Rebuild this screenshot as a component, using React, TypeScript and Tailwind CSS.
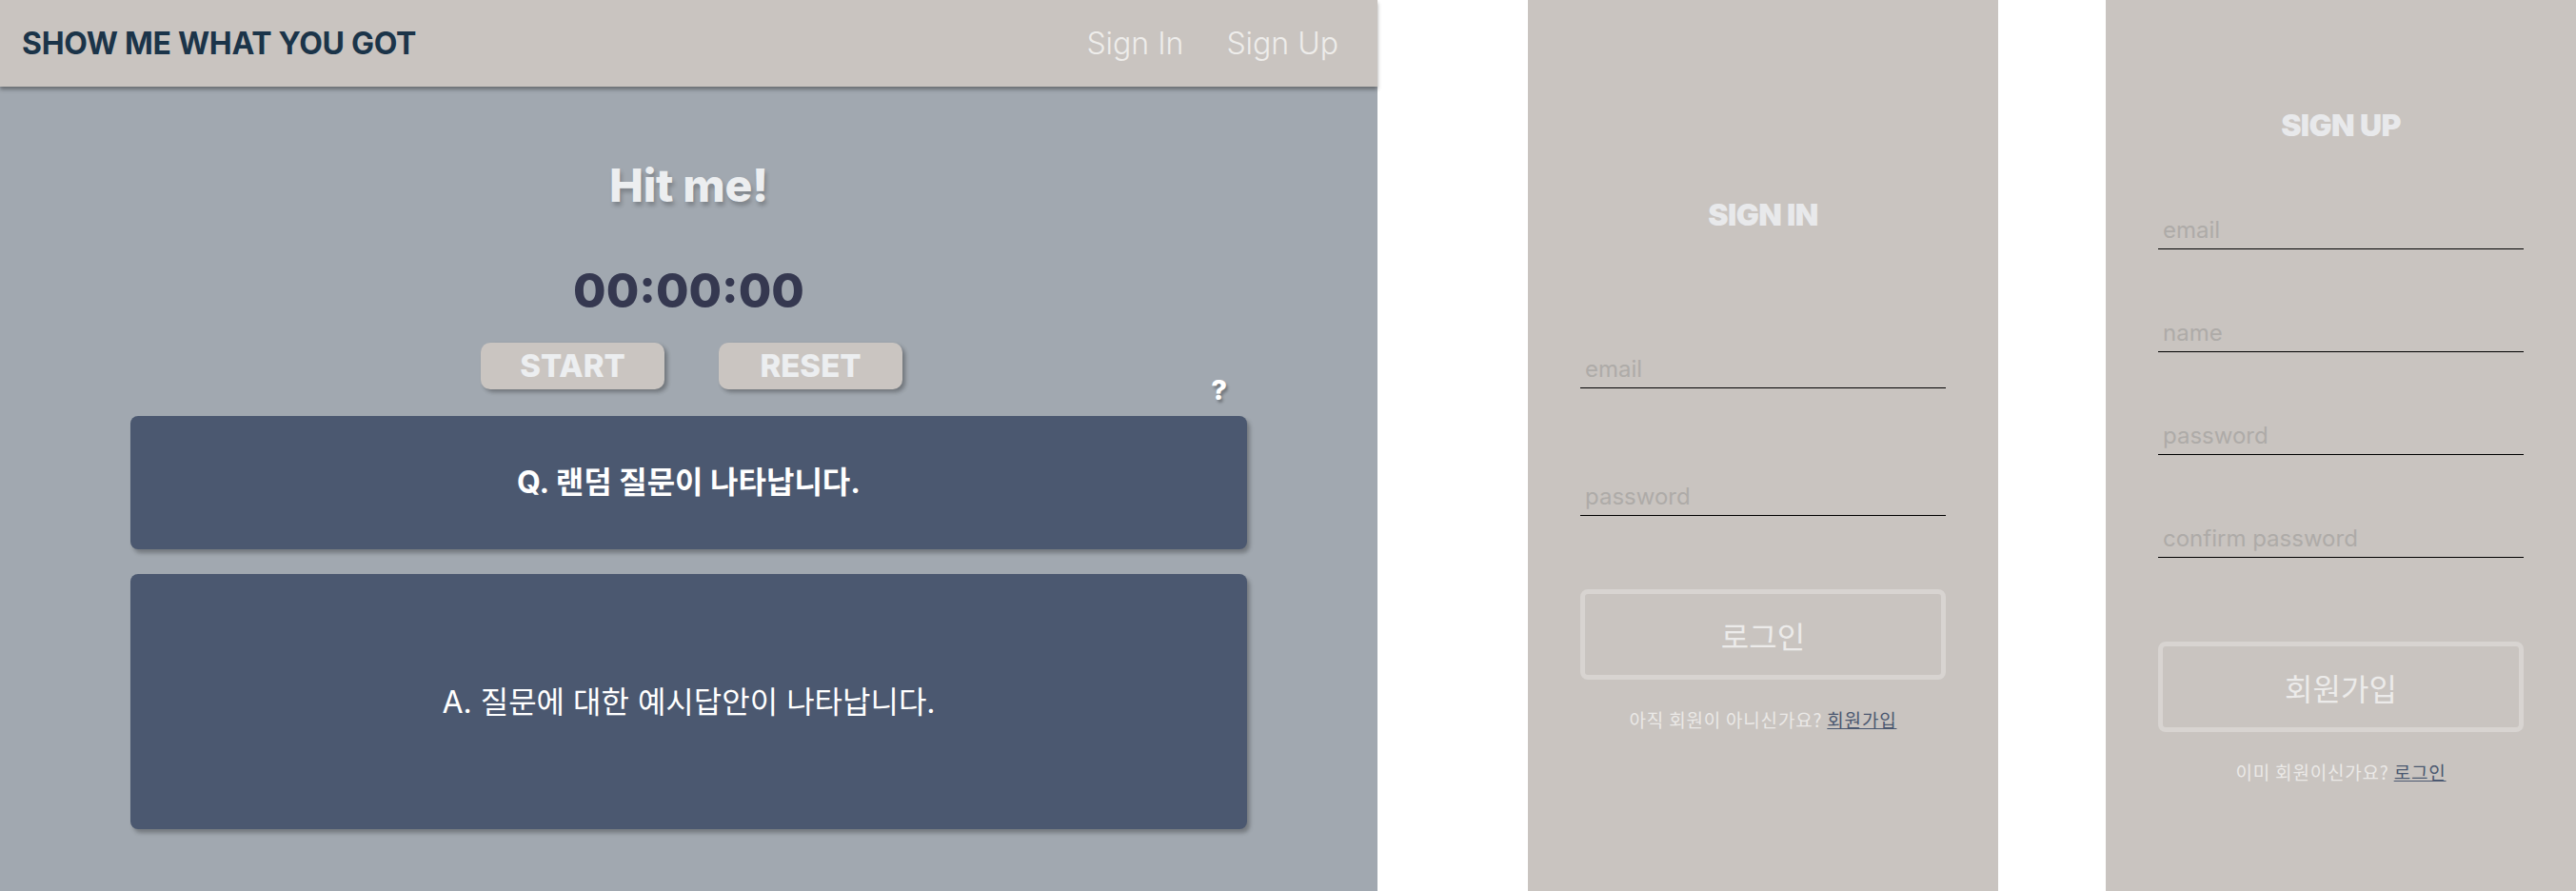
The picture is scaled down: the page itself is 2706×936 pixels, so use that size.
import React from 'react';

const inter = "font-['Inter','Noto_Sans_CJK_KR',sans-serif]";

const Field: React.FC<{ placeholder: string; type?: string; className?: string }> = ({ placeholder, type = 'text', className = '' }) => (
  <input
    type={type}
    placeholder={placeholder}
    className={`block w-[384px] h-[40px] pl-[5px] bg-transparent border-b border-black outline-none text-[24px] text-[#6b6866] placeholder:text-[#aeaba8] ${inter} ${className}`}
  />
);

const Timer: React.FC = () => (
  <div className="flex flex-col items-center">
    <h1 className="mt-[80px] text-[48px] leading-none font-extrabold text-[#eceef0] tracking-[-0.3px] [text-shadow:2px_4px_4px_rgba(0,0,0,0.22)]">
      Hit me!
    </h1>
    <div className="mt-[61px] text-[50px] leading-none font-extrabold text-[#353850]">
      00:00:00
    </div>
    <div className="mt-[30px] ml-[6px] flex gap-[57px]">
      {['START', 'RESET'].map(label => (
        <button
          key={label}
          className="w-[193px] h-[49px] rounded-[10px] bg-[#cac5c1] text-[33px] font-extrabold text-[#eceef0] leading-none shadow-[3px_3px_4px_rgba(0,0,0,0.3)]"
        >
          {label}
        </button>
      ))}
    </div>
  </div>
);

const QuizArea: React.FC = () => (
  <div className="relative mt-[28px] mx-[137px] flex flex-col gap-[26px]">
    <span className="absolute right-[21px] top-[-42px] text-[29px] font-extrabold text-white leading-none [text-shadow:2px_3px_3px_rgba(0,0,0,0.3)]">
      ?
    </span>
    <div className="h-[140px] rounded-[8px] bg-[#4b5870] flex items-center justify-center shadow-[3px_4px_4px_rgba(0,0,0,0.28)]">
      <p className="text-[32px] font-bold text-white">Q. 랜덤 질문이 나타납니다.</p>
    </div>
    <div className="h-[268px] rounded-[8px] bg-[#4b5870] flex items-center justify-center shadow-[3px_4px_4px_rgba(0,0,0,0.28)]">
      <p className="mt-[2px] text-[32px] font-normal text-white">A. 질문에 대한 예시답안이 나타납니다.</p>
    </div>
  </div>
);

const Main: React.FC = () => (
  <div className="w-[1447px] shrink-0 h-full bg-[#a1a8b0] flex flex-col">
    <header className="h-[91px] shrink-0 bg-[#c9c4c0] px-[23px] pr-[41px] flex items-center justify-between shadow-[0_3px_4px_rgba(0,0,0,0.35)] relative z-10">
      <span className="text-[32px] font-bold text-[#1b3449] tracking-[-0.3px]">SHOW ME WHAT YOU GOT</span>
      <nav className="flex items-center gap-[45px] text-[32px] font-light text-[#eeedeb]">
        <a>Sign In</a>
        <a>Sign Up</a>
      </nav>
    </header>
    <Timer />
    <QuizArea />
  </div>
);

const SignIn: React.FC = () => (
  <div className="w-[494px] shrink-0 h-full bg-[#c9c4c0] flex flex-col items-center">
    <h2 className="mt-[210px] text-[32px] leading-none font-black text-[#e8e9eb] tracking-[-0.6px]">SIGN IN</h2>
    <Field placeholder="email" className="mt-[126px]" />
    <Field placeholder="password" type="password" className="mt-[94px]" />
    <button className="mt-[77px] w-[384px] h-[95px] rounded-[8px] border-[5px] border-[#d8d4d1] text-[32px] text-[#ecebea] font-['Noto_Sans_CJK_KR',sans-serif]">
      로그인
    </button>
    <p className="mt-[28px] text-[19px] tracking-[0.8px] text-[#ebe9e7] font-['Noto_Sans_CJK_KR',sans-serif]">
      아직 회원이 아니신가요? <a className="underline text-[#4b5870]">회원가입</a>
    </p>
  </div>
);

const SignUp: React.FC = () => (
  <div className="w-[494px] shrink-0 h-full bg-[#c9c4c0] flex flex-col items-center">
    <h2 className="mt-[116px] text-[32px] leading-none font-black text-[#e8e9eb] tracking-[-0.6px]">SIGN UP</h2>
    <Field placeholder="email" className="mt-[74px]" />
    <Field placeholder="name" className="mt-[68px]" />
    <Field placeholder="password" type="password" className="mt-[68px]" />
    <Field placeholder="confirm password" type="password" className="mt-[68px]" />
    <button className="mt-[88px] w-[384px] h-[95px] rounded-[8px] border-[5px] border-[#d8d4d1] text-[32px] text-[#ecebea] font-['Noto_Sans_CJK_KR',sans-serif]">
      회원가입
    </button>
    <p className="mt-[28px] text-[19px] tracking-[0.8px] text-[#ebe9e7] font-['Noto_Sans_CJK_KR',sans-serif]">
      이미 회원이신가요? <a className="underline text-[#4b5870]">로그인</a>
    </p>
  </div>
);

export default function App() {
  return (
    <div className={`w-[2706px] h-[936px] bg-white flex overflow-hidden ${inter}`}>
      <Main />
      <div className="w-[158px] shrink-0" />
      <SignIn />
      <div className="w-[113px] shrink-0" />
      <SignUp />
    </div>
  );
}
